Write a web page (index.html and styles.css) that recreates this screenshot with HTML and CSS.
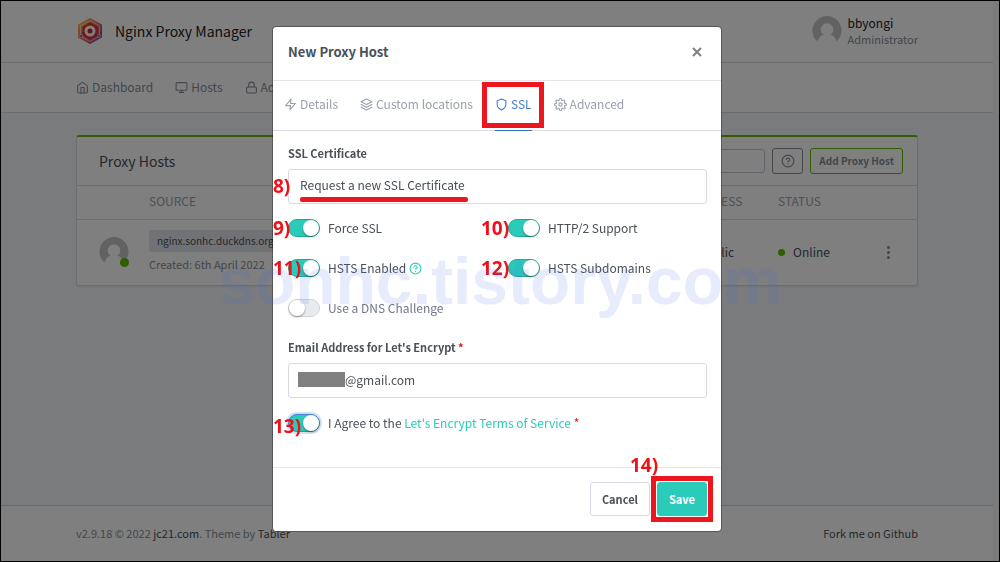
FILE: index.html
```html
<!DOCTYPE html>
<html lang="en">
<head>
<meta charset="utf-8">
<meta name="viewport" content="width=device-width, initial-scale=1">
<title>Nginx Proxy Manager</title>
<link rel="stylesheet" href="styles.css">
</head>
<body>
<svg class="sprite" aria-hidden="true">
  <symbol id="home" viewBox="0 0 24 24"><path d="M3 9l9-7 9 7v11a2 2 0 0 1-2 2H5a2 2 0 0 1-2-2z"/><path d="M9 22V12h6v10"/></symbol>
  <symbol id="monitor" viewBox="0 0 24 24"><rect x="2" y="3" width="20" height="14" rx="2"/><path d="M8 21h8M12 17v4"/></symbol>
  <symbol id="lock" viewBox="0 0 24 24"><rect x="3" y="11" width="18" height="11" rx="2"/><path d="M7 11V7a5 5 0 0 1 10 0v4"/></symbol>
  <symbol id="zap" viewBox="0 0 24 24"><path d="M13 2L3 14h9l-1 8 10-12h-9z"/></symbol>
  <symbol id="layers" viewBox="0 0 24 24"><path d="M12 2L2 7l10 5 10-5zM2 17l10 5 10-5M2 12l10 5 10-5"/></symbol>
  <symbol id="shield" viewBox="0 0 24 24"><path d="M12 22s8-4 8-10V5l-8-3-8 3v7c0 6 8 10 8 10z"/></symbol>
  <symbol id="settings" viewBox="0 0 24 24"><circle cx="12" cy="12" r="3"/><path d="M19.4 15a1.65 1.65 0 0 0 .33 1.82l.06.06a2 2 0 1 1-2.83 2.83l-.06-.06a1.65 1.65 0 0 0-2.8 1.17V21a2 2 0 0 1-4 0v-.09a1.65 1.65 0 0 0-2.9-1.08l-.06.06a2 2 0 1 1-2.83-2.83l.06-.06a1.65 1.65 0 0 0-1.17-2.8H3a2 2 0 0 1 0-4h.09a1.65 1.65 0 0 0 1.08-2.9l-.06-.06a2 2 0 1 1 2.83-2.83l.06.06a1.65 1.65 0 0 0 2.8-1.17V3a2 2 0 0 1 4 0v.09a1.65 1.65 0 0 0 2.8 1.17l.06-.06a2 2 0 1 1 2.83 2.83l-.06.06a1.65 1.65 0 0 0 1.17 2.8H21a2 2 0 0 1 0 4h-.09a1.65 1.65 0 0 0-1.51 1z"/></symbol>
  <symbol id="help" viewBox="0 0 24 24"><circle cx="12" cy="12" r="10"/><path d="M9.09 9a3 3 0 0 1 5.83 1c0 2-3 3-3 3M12 17v.5"/></symbol>
  <symbol id="person" viewBox="0 0 30 30"><path fill="#c4c4c4" stroke="none" d="M5.500 25.500A14.500 14.500 0 1 1 24.500 25.500Q23 20 18.500 18.800A6.300 6.300 0 1 0 11.500 18.800Q7 20 5.500 25.500z"/></symbol>
</svg>

<div class="page">
  <header class="topbar">
    <div class="container bar">
      <a class="brand" href="#">
        <svg class="logo" viewBox="0 0 26 28">
          <defs><linearGradient id="lg" x1="0" y1="0" x2="1" y2="1"><stop offset="0" stop-color="#ffd43c"/><stop offset=".45" stop-color="#f0705a"/><stop offset="1" stop-color="#7b3a9c"/></linearGradient></defs>
          <path d="M13 1l12 6.500v13L13 27 1 20.500v-13z" fill="url(#lg)"/>
          <path d="M13 3.500l9.500 5.200v10.600L13 24.500l-9.500-5.200V8.700z" fill="none" stroke="#fff" opacity=".6"/>
          <path d="M13 5.500l7.500 4.200v8.600L13 22.500l-7.500-4.200V9.700z" fill="#e2302f"/>
          <circle cx="13" cy="14" r="4" fill="#c92a2a" stroke="#fff" stroke-width="3"/>
          <circle cx="4" cy="19" r="1.500" fill="#7b3a9c" stroke="#fff" stroke-width=".6"/><circle cx="22" cy="19" r="1.500" fill="#7b3a9c" stroke="#fff" stroke-width=".6"/>
        </svg>
        <span>Nginx Proxy Manager</span>
      </a>
      <a class="user" href="#">
        <svg class="avatar"><use href="#person"/></svg>
        <span class="user-text"><span class="user-name">bbyongi</span><span class="user-role">Administrator</span></span>
      </a>
    </div>
  </header>
  <nav class="menu">
    <div class="container menu-items">
      <a href="#"><svg class="icon"><use href="#home"/></svg>Dashboard</a>
      <a href="#"><svg class="icon"><use href="#monitor"/></svg>Hosts</a>
      <a href="#"><svg class="icon"><use href="#lock"/></svg>Access Lists</a>
    </div>
  </nav>
  <main class="container main">
    <section class="card">
      <div class="card-header">
        <h1 class="card-title">Proxy Hosts</h1>
        <input class="search" type="text" aria-label="Search hosts">
        <button class="btn-small btn-help" aria-label="Help"><svg class="icon icon-help"><use href="#help"/></svg></button>
        <button class="btn-small btn-add">Add Proxy Host</button>
      </div>
      <table class="hosts">
        <colgroup><col class="col-avatar"><col><col class="col-access"><col class="col-status"><col class="col-menu"></colgroup>
        <thead><tr><th></th><th>SOURCE</th><th>ACCESS</th><th>STATUS</th><th></th></tr></thead>
        <tbody><tr>
          <td><div class="owner"><svg class="avatar"><use href="#person"/></svg><span class="presence"></span></div></td>
          <td><span class="tag">nginx.sonhc.duckdns.org</span><div class="created">Created: 6th April 2022</div></td>
          <td>Public</td>
          <td><span class="dot"></span>Online</td>
          <td><button class="more" aria-label="Actions"><i></i><i></i><i></i></button></td>
        </tr></tbody>
      </table>
    </section>
  </main>
  <footer class="footer">
    <div class="container bar">
      <p>v2.9.18 © 2022 <a href="#">jc21.com</a>. Theme by <a href="#">Tabler</a></p>
      <a href="#">Fork me on Github</a>
    </div>
  </footer>
</div>

<div class="backdrop">
  <form class="modal" role="dialog" aria-labelledby="modal-title">
    <div class="modal-header">
      <h2 id="modal-title">New Proxy Host</h2>
      <button type="button" class="close" aria-label="Close"><svg viewBox="0 0 10 10"><path d="M1 1l8 8M9 1L1 9"/></svg></button>
    </div>
    <div class="tabs" role="tablist">
      <a href="#" role="tab"><svg class="icon"><use href="#zap"/></svg>Details</a>
      <a href="#" role="tab"><svg class="icon"><use href="#layers"/></svg>Custom locations</a>
      <a href="#" role="tab" class="active" aria-selected="true"><svg class="icon"><use href="#shield"/></svg>SSL<span class="mark mark-tab"></span></a>
      <a href="#" role="tab"><svg class="icon"><use href="#settings"/></svg>Advanced</a>
    </div>
    <div class="modal-body">
      <label class="label" for="cert">SSL Certificate</label>
      <div class="field">
        <select id="cert" class="control"><option>Request a new SSL Certificate</option></select>
        <span class="underline"></span><span class="step">8)</span>
      </div>
      <div class="switches">
        <div class="switch"><input type="checkbox" id="force" checked><label for="force">Force SSL</label><span class="step">9)</span></div>
        <div class="switch"><input type="checkbox" id="http2" checked><label for="http2">HTTP/2 Support</label><span class="step step-wide">10)</span></div>
        <div class="switch"><input type="checkbox" id="hsts" checked><label for="hsts">HSTS Enabled</label><a href="#" class="hint" aria-label="About HSTS"><svg class="icon"><use href="#help"/></svg></a><span class="step">11)</span></div>
        <div class="switch"><input type="checkbox" id="sub" checked><label for="sub">HSTS Subdomains</label><span class="step step-wide">12)</span></div>
        <div class="switch muted"><input type="checkbox" id="dns"><label for="dns">Use a DNS Challenge</label></div>
      </div>
      <label class="label" for="email">Email Address for Let's Encrypt <span class="required">*</span></label>
      <div class="field">
        <input id="email" class="control email" type="text" value="@gmail.com">
        <span class="redacted"></span>
      </div>
      <div class="switch agree"><input type="checkbox" id="agree" class="focused" checked><label for="agree">I Agree to the <a href="#">Let's Encrypt Terms of Service</a> <span class="required">*</span></label><span class="step">13)</span></div>
    </div>
    <div class="modal-footer">
      <button type="button" class="btn">Cancel</button>
      <div class="save-wrap"><button type="button" class="btn btn-save">Save</button><span class="mark mark-save"></span><span class="step step-save">14)</span></div>
    </div>
  </form>
</div>
<div class="watermark">sonhc.tistory.com</div>
</body>
</html>
```

FILE: styles.css
```css
* { box-sizing: border-box; }
body {
  margin: 0;
  background: #f5f7fb;
  color: #495057;
  font: 12px/20px "Noto Sans CJK SC", "Noto Sans CJK KR", "Open Sans", sans-serif;
}
a { color: inherit; text-decoration: none; }
button, input, select { font: inherit; color: inherit; margin: 0; }
button { cursor: pointer; }
h1, h2, p { margin: 0; font-weight: 400; }
.sprite { position: absolute; width: 0; height: 0; }
.icon { width: 13px; height: 13px; flex: none; fill: none; stroke: currentColor; stroke-width: 2; stroke-linecap: round; stroke-linejoin: round; }

/* Page */
.page { min-height: 100vh; display: flex; flex-direction: column; border: 1px solid #000; padding-right: 6px; }
.container { width: 100%; max-width: 842px; margin: 0 auto; }
.bar { display: flex; align-items: center; justify-content: space-between; }
.topbar { background: #fff; border-bottom: 1px solid #d5d9e2; padding: 14px 0 15px; }
.brand { display: flex; align-items: center; gap: 11px; font-size: 14px; color: #222; }
.logo { width: 28px; height: 28px; }
.user { display: flex; align-items: center; gap: 6px; }
.avatar { display: block; width: 30px; height: 30px; }
.user-text { display: flex; flex-direction: column; line-height: 16px; }
.user-name { color: #222; }
.user-role { font-size: 11px; color: #868e96; }
.menu { background: #fff; border-bottom: 1px solid #d5d9e2; color: #868c98; }
.menu-items { display: flex; gap: 22px; padding: 14px 0 15px; }
.menu-items a { display: flex; align-items: center; gap: 3px; }

.main { flex: 1; padding-top: 22px; }
.card { background: #fff; border: 1px solid #d5dae6; border-top: 2px solid #5eba00; border-radius: 3px; box-shadow: 0 1px 2px rgba(0,0,0,.08); }
.card-header { display: flex; align-items: center; gap: 7px; padding: 11px 14px 11px 22px; border-bottom: 1px solid #d5dae6; }
.card-title { flex: 1; font-size: 14px; }
.search { width: 130px; height: 24px; border: 1px solid #c5c9d4; border-radius: 3px; background: #fff; }
.btn-small { height: 26px; display: flex; align-items: center; justify-content: center; background: #fff; border-radius: 3px; font-size: 10px; font-weight: 700; color: #868e96; padding: 0 8px; }
.btn-help { width: 31px; border: 1px solid #868e96; }
.icon-help { width: 14px; height: 14px; }
.btn-add { border: 1px solid #5eba00; }
.hosts { width: 100%; border-collapse: collapse; table-layout: fixed; }
.col-avatar { width: 60px; }
.col-access { width: 79px; }
.col-status { width: 100px; }
.col-menu { width: 51px; }
.hosts th { padding: 5px 12px 8px; text-align: left; font-size: 12px; font-weight: 400; color: #9aa0ac; border-bottom: 1px solid #d5dae6; }
.hosts td { padding: 10px 12px 11px; }
.hosts td:first-child { padding-left: 22px; }
.hosts td:last-child { padding-right: 25px; }
.owner { position: relative; width: 30px; }
.presence { position: absolute; right: 0; bottom: 0; width: 9px; height: 9px; border-radius: 50%; background: #5eba00; }
.tag { display: inline-block; padding: 1px 8px; background: #e2e5ea; border-radius: 3px; font-size: 10px; }
.created { margin-top: 2px; font-size: 11px; color: #868e96; }
.dot { display: inline-block; width: 7px; height: 7px; margin-right: 8px; border-radius: 50%; background: #5eba00; vertical-align: 1px; }
.more { display: flex; flex-direction: column; gap: 2px; margin-left: auto; border: 0; padding: 0 2px; background: none; }
.more i { width: 3px; height: 3px; border-radius: 50%; background: #868e96; }
.footer { background: #fff; border-top: 1px solid #c9d3e6; padding: 17px 0 18px; font-size: 11px; color: #868e96; }
.footer a { color: #495057; }

/* Modal */
.backdrop { position: fixed; inset: 1px; padding: 26px 6px 0 0; background: rgba(0,0,0,.5); display: flex; justify-content: center; align-items: flex-start; }
.modal { width: 100%; max-width: 448px; background: #fff; border-radius: 3px; outline: 1px solid rgba(0,0,0,.3); }
.modal-header { display: flex; align-items: center; justify-content: space-between; padding: 15px 19px 18px 15px; border-bottom: 1px solid #e4e6ea; }
.modal-header h2 { font-size: 13px; font-weight: 700; }
.close { border: 0; background: none; padding: 0; width: 10px; height: 10px; }
.close svg { display: block; width: 10px; height: 10px; fill: none; stroke: #808080; stroke-width: 2; }
.tabs { display: flex; gap: 22px; padding: 0 11px; border-bottom: 1px solid #d8dbe6; color: #9aa0ac; }
.tabs a { position: relative; display: flex; align-items: center; gap: 3px; padding: 13px 0 16px; margin-bottom: -1px; border-bottom: 1px solid transparent; }
.tabs .active { color: #467fcf; border-bottom-color: #316cbe; }
.mark { position: absolute; border: 5px solid #ec161e; pointer-events: none; }
.mark-tab { inset: 1px -12px 2px -13px; }
.mark-save { inset: -6px; }
.modal-body { padding: 12px 14px 34px 15px; }
.label { display: block; margin-bottom: 6px; font-size: 11px; font-weight: 700; }
.required { color: #cd201f; }
.field { position: relative; }
.control { display: block; width: 100%; height: 35px; padding: 0 11px 3px; border: 1px solid #d6dae8; border-radius: 3px; background: #fff; appearance: none; outline: 0; }
.email { padding-left: 56px; }
.underline { position: absolute; left: 12px; bottom: 2px; width: 168px; height: 5px; border-radius: 2px; background: #ec161e; }
.redacted { position: absolute; left: 10px; top: 9px; width: 47px; height: 15px; background: #808080; }
.switches { display: grid; grid-template-columns: 220px 1fr; row-gap: 20px; padding: 14px 0 19px; }
.switch { position: relative; display: flex; align-items: center; gap: 8px; }
.switch input { appearance: none; width: 32px; height: 18px; flex: none; border: 1px solid #20a999; border-radius: 9px; background: #2bcbba; }
.switch input::before { content: ""; display: block; width: 16px; height: 16px; margin-left: 14px; border-radius: 50%; background: #fff; box-shadow: 0 1px 2px rgba(0,0,0,.4); }
.switch input:not(:checked) { background: #e9ecef; border-color: #d0d3d8; }
.switch input:not(:checked)::before { margin-left: 0; }
.switch input.focused { border-color: #467fcf; box-shadow: 0 0 0 2px #d3dff3; }
.switch a { color: #2bcbba; }
.muted { color: #6e7687; }
.hint { display: flex; margin-left: -5px; }
.agree { padding-top: 15px; }
.modal-footer { display: flex; justify-content: flex-end; gap: 7px; padding: 14px 14px 15px; border-top: 1px solid #e4e6ea; }
.btn { display: block; height: 34px; padding: 0 11px; border: 1px solid #d6dae8; border-radius: 3px; background: #fff; font-size: 11px; font-weight: 700; }
.btn-save { border-color: #2bcbba; background: #2bcbba; color: #fff; }
.save-wrap { position: relative; }

/* Step numbers and watermark */
.step { position: absolute; left: -15px; bottom: 7px; font: 700 19px/22px "Open Sans", sans-serif; color: #f01018; pointer-events: none; }
.switch .step { bottom: -1px; }
.agree .step { bottom: -4px; }
.switch .step-wide { left: -27px; }
.step-save { left: -27px; bottom: 40px; }
.watermark { position: fixed; left: 0; right: 0; top: 245px; text-align: center; font: 700 66px/72px "Liberation Sans", sans-serif; color: rgba(65,105,225,.13); pointer-events: none; }
```
